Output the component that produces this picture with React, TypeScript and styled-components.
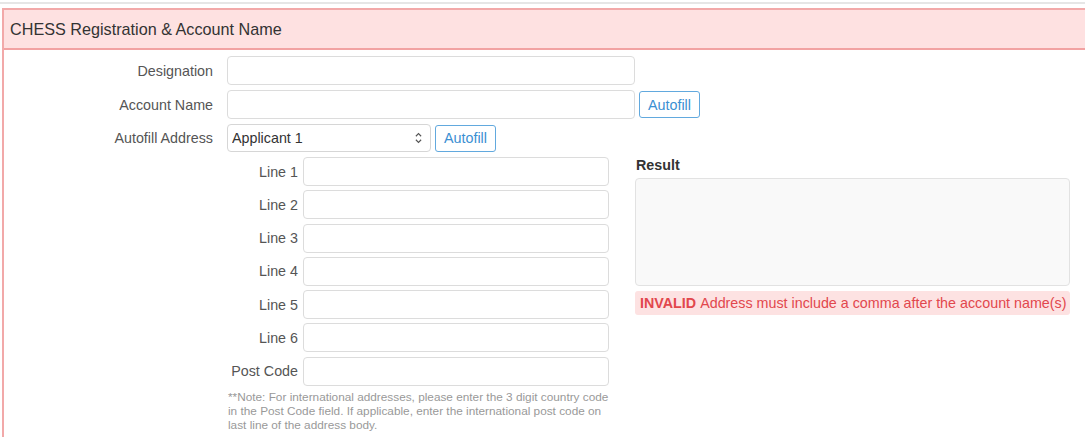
import React from 'react';
import styled, { createGlobalStyle } from 'styled-components';

const GlobalStyle = createGlobalStyle`
  html, body {
    margin: 0;
    padding: 0;
    background: #fff;
    overflow: hidden;
  }
  body {
    font-family: 'Liberation Sans', Arial, sans-serif;
    font-size: 14px;
    color: #333;
  }
`;

const addressLines = ['Line 1', 'Line 2', 'Line 3', 'Line 4', 'Line 5', 'Line 6', 'Post Code'];

const App: React.FC = () => (
  <>
    <GlobalStyle />
    <Page>
      <TopRule />
      <Panel>
        <PanelHeader>CHESS Registration &amp; Account Name</PanelHeader>
        <PanelBody>
          <FormGrid>
            <Label>Designation</Label>
            <FieldRow>
              <TextInput type="text" />
            </FieldRow>

            <Label>Account Name</Label>
            <FieldRow>
              <TextInput type="text" />
              <OutlineButton>Autofill</OutlineButton>
            </FieldRow>

            <Label>Autofill Address</Label>
            <FieldRow>
              <SelectWrap>
                <Select defaultValue="1">
                  <option value="1">Applicant 1</option>
                  <option value="2">Applicant 2</option>
                </Select>
                <SelectIcon viewBox="0 0 10 16">
                  <path d="M2 6 L5 3 L8 6 M2 10 L5 13 L8 10" fill="none" stroke="#555" strokeWidth="1.3" />
                </SelectIcon>
              </SelectWrap>
              <OutlineButton>Autofill</OutlineButton>
            </FieldRow>
          </FormGrid>

          <AddressSection>
            <AddressColumn>
              <AddressGrid>
                {addressLines.map((line) => (
                  <React.Fragment key={line}>
                    <LineLabel>{line}</LineLabel>
                    <LineInput type="text" />
                  </React.Fragment>
                ))}
              </AddressGrid>
              <Note>
                **Note: For international addresses, please enter the 3 digit country code in the
                Post Code field. If applicable, enter the international post code on last line of
                the address body.
              </Note>
            </AddressColumn>

            <ResultColumn>
              <ResultTitle>Result</ResultTitle>
              <ResultBox />
              <Alert>
                <strong>INVALID</strong> Address must include a comma after the account name(s)
              </Alert>
            </ResultColumn>
          </AddressSection>
        </PanelBody>
      </Panel>
    </Page>
  </>
);

export default App;

const Page = styled.div`
  width: 1085px;
  height: 437px;
  overflow: hidden;
`;

const TopRule = styled.div`
  margin-top: 2px;
  height: 2px;
  background: #e6e6e6;
`;

const Panel = styled.section`
  margin: 4px 0 0 2px;
  width: 1110px;
  border: 2px solid #f2a9a9;
  border-bottom: none;
  height: 440px;
`;

const PanelHeader = styled.div`
  height: 38px;
  display: flex;
  align-items: center;
  padding-left: 6px;
  background: #fee1e1;
  border-bottom: 2px solid #f2a2a2;
  font-size: 16.2px;
  color: #333;
`;

const PanelBody = styled.div`
  padding-top: 6px;
`;

const FormGrid = styled.div`
  display: grid;
  grid-template-columns: 209px auto;
  column-gap: 14px;
  row-gap: 5px;
  align-items: center;
`;

const Label = styled.label`
  text-align: right;
  color: #555;
  font-size: 14.3px;
`;

const FieldRow = styled.div`
  display: flex;
  align-items: center;
  gap: 4px;
`;

const TextInput = styled.input`
  width: 408px;
  height: 29px;
  box-sizing: border-box;
  border: 1px solid #dcdcdc;
  border-radius: 4px;
  background: #fff;
  font: inherit;
  padding: 0 6px;
`;

const OutlineButton = styled.button`
  height: 27px;
  padding: 0 8px;
  box-sizing: border-box;
  border: 1px solid #62a9de;
  border-radius: 3px;
  background: #fff;
  color: #3b8fd2;
  font-family: 'Liberation Sans', Arial, sans-serif;
  font-size: 14.3px;
  cursor: pointer;
`;

const SelectWrap = styled.div`
  position: relative;
  width: 204px;
  height: 28px;
`;

const Select = styled.select`
  width: 100%;
  height: 100%;
  box-sizing: border-box;
  appearance: none;
  border: 1px solid #d6d6d6;
  border-radius: 4px;
  background: #fff;
  color: #333;
  font-family: 'Liberation Sans', Arial, sans-serif;
  font-size: 14.3px;
  padding: 0 4px;
`;

const SelectIcon = styled.svg`
  position: absolute;
  right: 8px;
  top: 7px;
  width: 9px;
  height: 14px;
  pointer-events: none;
`;

const AddressSection = styled.div`
  display: flex;
  align-items: flex-start;
  gap: 26px;
  margin: 5px 0 0 223px;
`;

const AddressColumn = styled.div`
  width: 382px;
`;

const AddressGrid = styled.div`
  display: grid;
  grid-template-columns: 71px 306px;
  column-gap: 5px;
  row-gap: 4.3px;
  align-items: center;
`;

const LineLabel = styled.label`
  text-align: right;
  color: #555;
  font-size: 14.3px;
`;

const LineInput = styled.input`
  height: 29px;
  box-sizing: border-box;
  border: 1px solid #dcdcdc;
  border-radius: 4px;
  background: #fff;
  font: inherit;
  padding: 0 6px;
`;

const Note = styled.p`
  margin: 4px 0 0 1px;
  font-size: 11.8px;
  line-height: 14px;
  color: #999;
`;

const ResultColumn = styled.div`
  width: 435px;
  display: flex;
  flex-direction: column;
`;

const ResultTitle = styled.div`
  font-weight: bold;
  font-size: 14.3px;
  color: #333;
  height: 21px;
  line-height: 16px;
  padding-left: 1px;
`;

const ResultBox = styled.div`
  height: 108px;
  box-sizing: border-box;
  border: 1px solid #e2e2e2;
  border-radius: 4px;
  background: #f9f9f9;
`;

const Alert = styled.div`
  margin-top: 5px;
  height: 24px;
  display: flex;
  align-items: center;
  padding-left: 5px;
  border-radius: 3px;
  background: #fde2e2;
  color: #e2474d;
  font-size: 14.3px;
  white-space: nowrap;

  strong {
    margin-right: 4px;
  }
`;
